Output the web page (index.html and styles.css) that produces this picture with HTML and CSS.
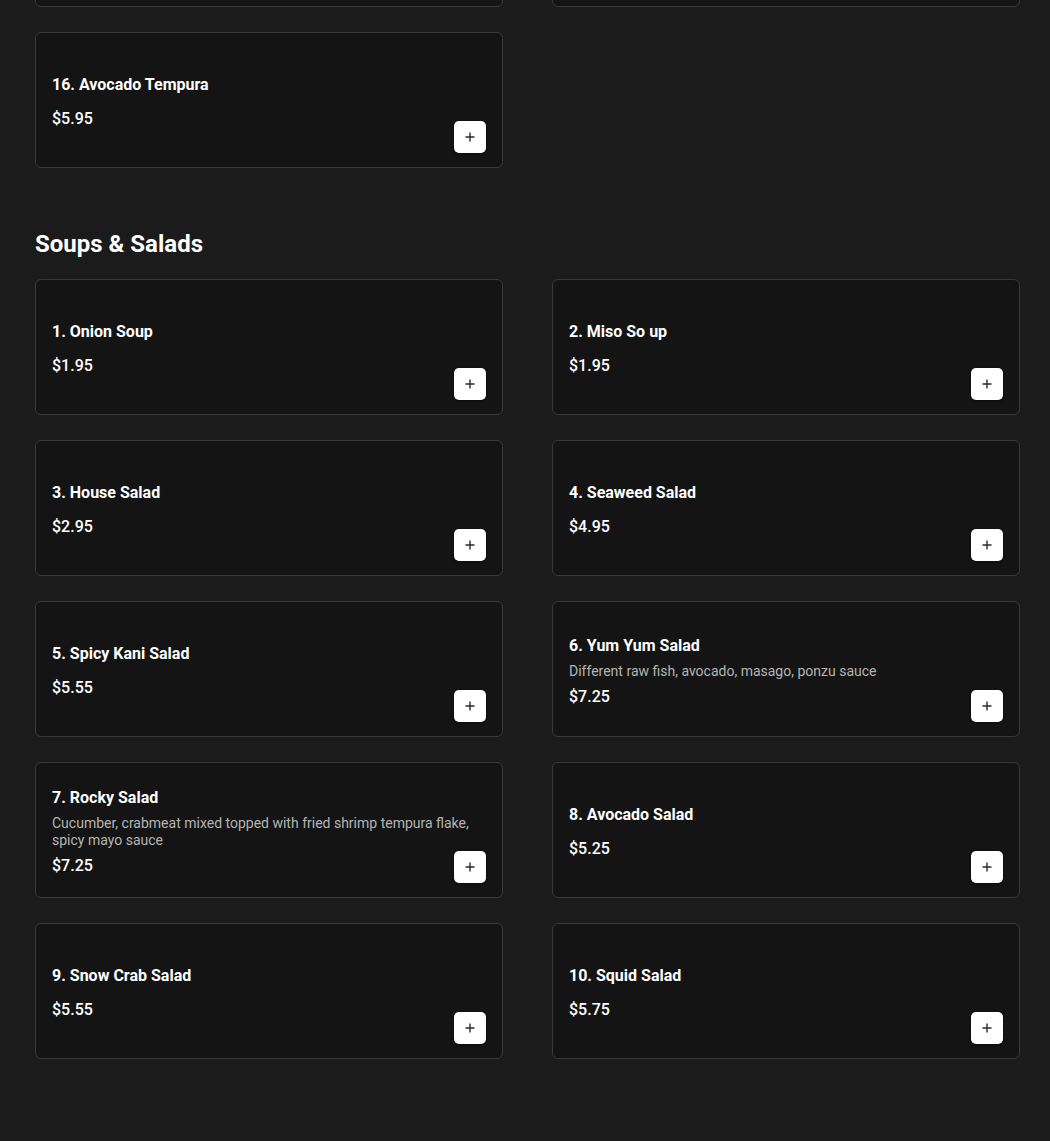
FILE: index.html
```html
<!DOCTYPE html>
<html lang="en">
<head>
<meta charset="utf-8">
<title>Menu</title>
<link rel="stylesheet" href="styles.css">
</head>
<body>
<main class="menu">
  <section class="section section-prev">
    <div class="grid">
      <div class="card card-partial"></div>
      <div class="card card-partial"></div>
      <div class="card"><div class="info"><div class="name">16. Avocado Tempura</div><div class="price">$5.95</div></div><button class="add" aria-label="Add"><svg viewBox="0 0 12 12" width="12" height="12"><path d="M6 1.5v9M1.5 6h9" stroke="#2b2b2b" stroke-width="1.4" fill="none"/></svg></button></div>
    </div>
  </section>

  <section class="section">
    <h2 class="section-title">Soups &amp; Salads</h2>
    <div class="grid">
      <div class="card"><div class="info"><div class="name">1. Onion Soup</div><div class="price">$1.95</div></div><button class="add" aria-label="Add"><svg viewBox="0 0 12 12" width="12" height="12"><path d="M6 1.5v9M1.5 6h9" stroke="#2b2b2b" stroke-width="1.4" fill="none"/></svg></button></div>
      <div class="card"><div class="info"><div class="name">2. Miso So up</div><div class="price">$1.95</div></div><button class="add" aria-label="Add"><svg viewBox="0 0 12 12" width="12" height="12"><path d="M6 1.5v9M1.5 6h9" stroke="#2b2b2b" stroke-width="1.4" fill="none"/></svg></button></div>
      <div class="card"><div class="info"><div class="name">3. House Salad</div><div class="price">$2.95</div></div><button class="add" aria-label="Add"><svg viewBox="0 0 12 12" width="12" height="12"><path d="M6 1.5v9M1.5 6h9" stroke="#2b2b2b" stroke-width="1.4" fill="none"/></svg></button></div>
      <div class="card"><div class="info"><div class="name">4. Seaweed Salad</div><div class="price">$4.95</div></div><button class="add" aria-label="Add"><svg viewBox="0 0 12 12" width="12" height="12"><path d="M6 1.5v9M1.5 6h9" stroke="#2b2b2b" stroke-width="1.4" fill="none"/></svg></button></div>
      <div class="card"><div class="info"><div class="name">5. Spicy Kani Salad</div><div class="price">$5.55</div></div><button class="add" aria-label="Add"><svg viewBox="0 0 12 12" width="12" height="12"><path d="M6 1.5v9M1.5 6h9" stroke="#2b2b2b" stroke-width="1.4" fill="none"/></svg></button></div>
      <div class="card"><div class="info"><div class="name">6. Yum Yum Salad</div><div class="desc">Different raw fish, avocado, masago, ponzu sauce</div><div class="price">$7.25</div></div><button class="add" aria-label="Add"><svg viewBox="0 0 12 12" width="12" height="12"><path d="M6 1.5v9M1.5 6h9" stroke="#2b2b2b" stroke-width="1.4" fill="none"/></svg></button></div>
      <div class="card"><div class="info"><div class="name">7. Rocky Salad</div><div class="desc">Cucumber, crabmeat mixed topped with fried shrimp tempura flake, spicy mayo sauce</div><div class="price">$7.25</div></div><button class="add" aria-label="Add"><svg viewBox="0 0 12 12" width="12" height="12"><path d="M6 1.5v9M1.5 6h9" stroke="#2b2b2b" stroke-width="1.4" fill="none"/></svg></button></div>
      <div class="card"><div class="info"><div class="name">8. Avocado Salad</div><div class="price">$5.25</div></div><button class="add" aria-label="Add"><svg viewBox="0 0 12 12" width="12" height="12"><path d="M6 1.5v9M1.5 6h9" stroke="#2b2b2b" stroke-width="1.4" fill="none"/></svg></button></div>
      <div class="card"><div class="info"><div class="name">9. Snow Crab Salad</div><div class="price">$5.55</div></div><button class="add" aria-label="Add"><svg viewBox="0 0 12 12" width="12" height="12"><path d="M6 1.5v9M1.5 6h9" stroke="#2b2b2b" stroke-width="1.4" fill="none"/></svg></button></div>
      <div class="card"><div class="info"><div class="name">10. Squid Salad</div><div class="price">$5.75</div></div><button class="add" aria-label="Add"><svg viewBox="0 0 12 12" width="12" height="12"><path d="M6 1.5v9M1.5 6h9" stroke="#2b2b2b" stroke-width="1.4" fill="none"/></svg></button></div>
    </div>
  </section>
</main>
</body>
</html>
```

FILE: styles.css
```css
html, body {
  margin: 0;
  padding: 0;
  background: #1b1b1b;
  color: #ffffff;
  font-family: Roboto, "Liberation Sans", Arial, sans-serif;
}

.menu {
  padding: 0 30px 83px 35px;
  min-height: 1141px;
  box-sizing: border-box;
}

.section-prev {
  margin-top: -129px;
}

.section-title {
  margin: 60px 0 19px;
  font-size: 24px;
  line-height: 32px;
  font-weight: 700;
  color: #ffffff;
}

.grid {
  display: grid;
  grid-template-columns: 468px 468px;
  column-gap: 49px;
  row-gap: 25px;
}

.card {
  display: grid;
  grid-template-columns: 1fr;
  grid-template-rows: 1fr;
  min-height: 136px;
  box-sizing: border-box;
  padding: 18px 16px 14px;
  background: #141414;
  border: 1px solid #393939;
  border-radius: 6px;
}

.info {
  grid-area: 1 / 1;
  align-self: center;
  display: flex;
  flex-direction: column;
}

.name {
  font-size: 16px;
  line-height: 20px;
  font-weight: 700;
  margin-bottom: 7px;
}

.desc {
  font-size: 14px;
  line-height: 17px;
  color: #b4b4b4;
}

.price {
  font-size: 16px;
  line-height: 20px;
  font-weight: 500;
  margin-top: 7px;
}

.add {
  grid-area: 1 / 1;
  align-self: end;
  justify-self: end;
  width: 32px;
  height: 32px;
  padding: 0;
  margin: 0;
  border: none;
  border-radius: 5px;
  background: #ffffff;
  box-shadow: 0 1px 3px rgba(0, 0, 0, 0.5);
  display: flex;
  align-items: center;
  justify-content: center;
}

.add svg {
  display: block;
}
```
